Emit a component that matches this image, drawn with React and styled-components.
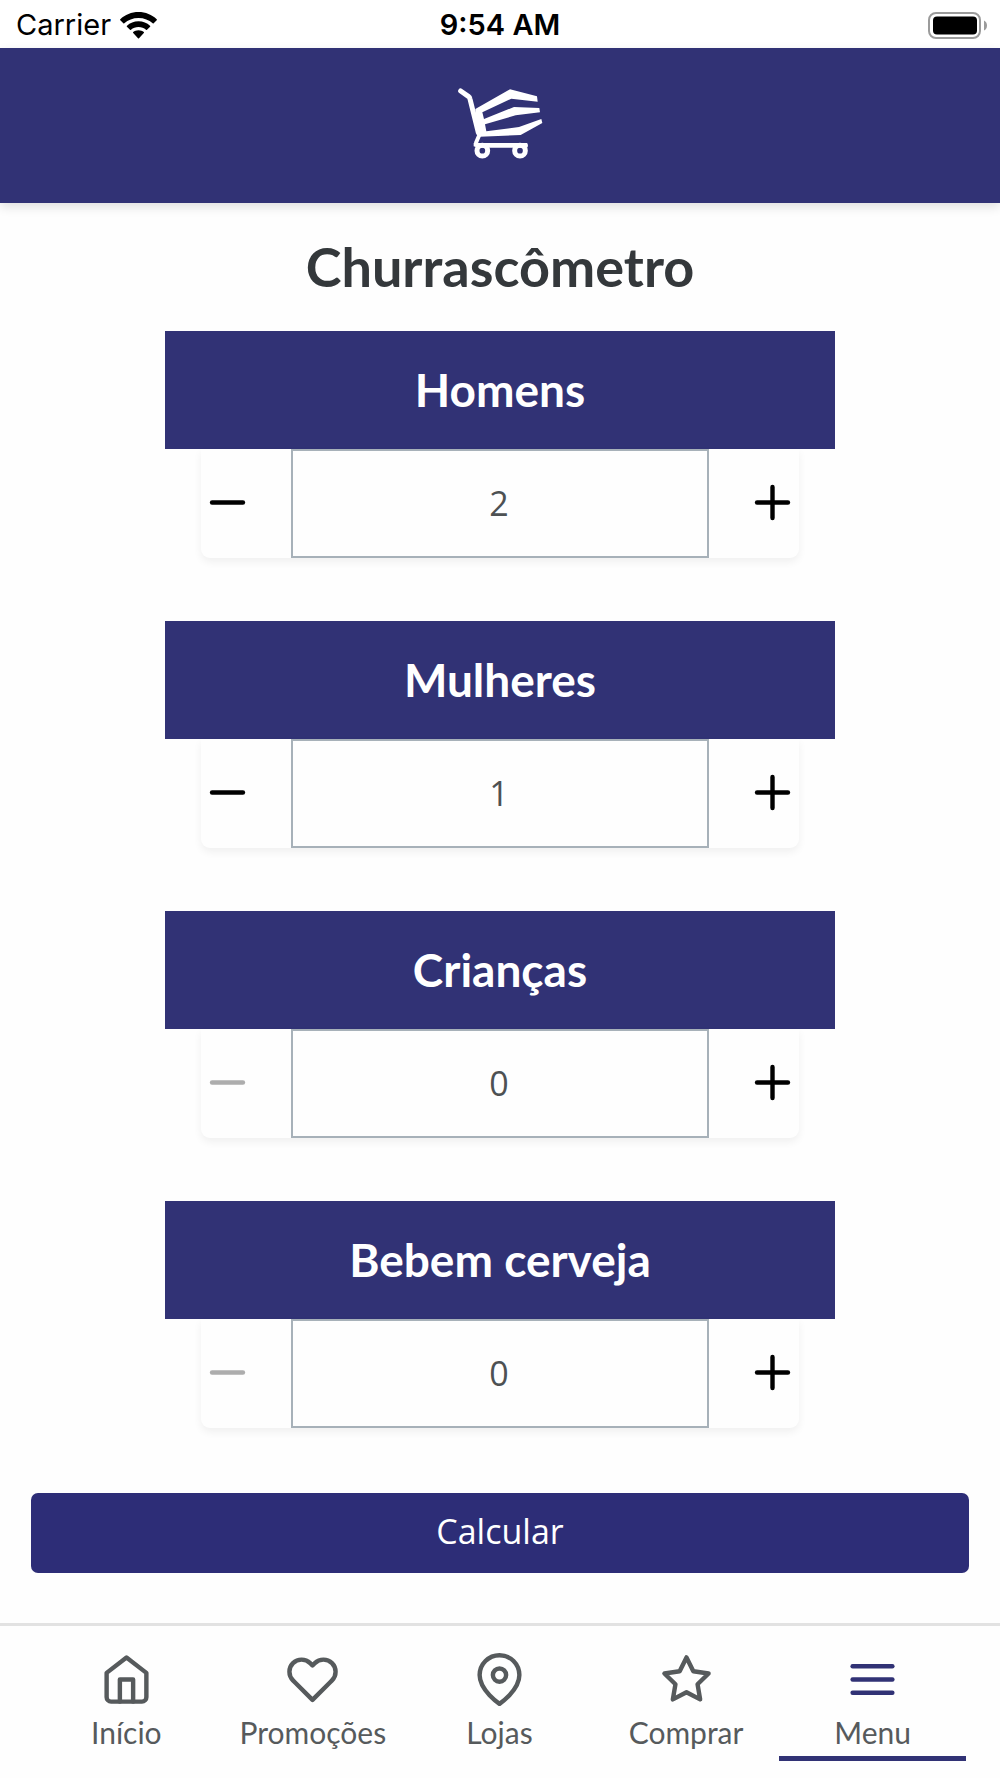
import React, { useState } from "react";
import styled, { createGlobalStyle } from "styled-components";
import {
  FiHeart,
  FiHome,
  FiMapPin,
  FiMenu,
  FiMinus,
  FiPlus,
  FiStar,
} from "react-icons/fi";

const GlobalStyle = createGlobalStyle`
  * {
    box-sizing: border-box;
  }
  body {
    margin: 0;
    background: #fefefe;
    font-family: "Lato", "Open Sans", sans-serif;
  }
`;

const Screen = styled.div`
  display: flex;
  flex-direction: column;
  min-height: 100vh;
`;
const StatusBar = styled.div`
  display: grid;
  grid-template-columns: 1fr auto 1fr;
  align-items: center;
  height: 48px;
  padding: 2px 13px 0;
  background: #fff;
  color: #000;
  font-family: "Inter", sans-serif;
  font-size: 29px;
  line-height: 46px;
`;
const Carrier = styled.div`
  display: flex;
  align-items: center;
  gap: 9px;
  padding-left: 3px;
`;
const Clock = styled.time`
  font-weight: 600;
`;
const BatteryIcon = styled.svg`
  justify-self: end;
`;
const Header = styled.header`
  display: flex;
  justify-content: center;
  padding: 39px 0 44px;
  background: #313275;
  box-shadow: 0 4px 10px rgba(0, 0, 0, 0.12);
`;
const Main = styled.main`
  flex: 1;
  display: flex;
  flex-direction: column;
  align-items: center;
  padding: 0 31px 48px;
`;
const Title = styled.h1`
  margin: 0;
  color: #34383b;
  font-size: 54px;
  font-weight: 700;
  line-height: 128px;
`;
const Form = styled.form`
  display: flex;
  flex-direction: column;
  align-items: center;
  gap: 65px;
  width: 100%;
`;
const Groups = styled.div`
  display: flex;
  flex-direction: column;
  gap: 63px;
  width: 670px;
  max-width: 100%;
`;
const Group = styled.div`
  display: flex;
  flex-direction: column;
`;
const GroupLabel = styled.label`
  background: #313275;
  color: #fff;
  font-size: 46px;
  font-weight: 700;
  line-height: 118px;
  text-align: center;
`;
const Stepper = styled.div`
  display: flex;
  height: 109px;
  margin: 0 36px;
  border-radius: 0 0 9px 9px;
  box-shadow: 0 4px 8px rgba(0, 0, 0, 0.06);
`;
const StepButton = styled.button`
  display: flex;
  align-items: center;
  justify-content: ${({ $align }) => $align};
  width: 90px;
  padding: 0 0 3px;
  border: none;
  background: transparent;
  color: #000;
  cursor: pointer;
  &:disabled {
    color: #adadad;
    cursor: default;
  }
`;
const Amount = styled.input`
  flex: 1;
  min-width: 0;
  padding: 0 2px 2px 0;
  border: 2px solid #a7b1b9;
  border-radius: 0;
  background: #fefefe;
  color: #4d5153;
  font-family: "Open Sans", sans-serif;
  font-size: 34px;
  text-align: center;
`;
const Submit = styled.button`
  width: 100%;
  height: 80px;
  padding: 0 0 4px;
  border: none;
  border-radius: 7px;
  background: #2d2d77;
  color: #fff;
  font-family: "Open Sans", sans-serif;
  font-size: 34px;
  cursor: pointer;
`;
const TabBar = styled.nav`
  display: flex;
  padding: 0 34px 17px 33px;
  border-top: 3px solid #e2e2e2;
`;
const Tab = styled.a`
  flex: 1 1 0;
  display: flex;
  flex-direction: column;
  align-items: center;
  padding-top: 27px;
  border-bottom: 5px solid ${({ $active }) => ($active ? "#313275" : "transparent")};
  color: #565a5c;
  font-size: 30px;
  line-height: 48px;
  text-decoration: none;
  svg {
    margin-bottom: 2px;
    color: ${({ $active }) => ($active ? "#313275" : "inherit")};
  }
`;

const WifiIcon = () => (
  <svg width="37" height="27" viewBox="0 0 37 27" fill="#000" aria-hidden="true">
    <path d="M18.500 0C25.500 0 32 2.700 36.700 7.200Q37.200 7.700 36.700 8.200L33.700 11.300Q33.200 11.800 32.700 11.300C29 7.900 24 5.900 18.500 5.900S8 7.900 4.300 11.300Q3.800 11.800 3.300 11.300L.3 8.200Q-.2 7.700.3 7.200C5 2.700 11.500 0 18.500 0Z" />
    <path d="M18.500 9.300C23 9.300 27 11 30 13.700Q30.600 14.200 30.100 14.700L27 17.700Q26.500 18.200 26 17.700C24 15.900 21.400 14.900 18.500 14.900S13 15.900 11 17.700Q10.500 18.200 10 17.700L6.900 14.700Q6.400 14.200 7 13.700C10 11 14 9.300 18.500 9.300Z" />
    <path d="M18.500 18.200C20.600 18.200 22.400 18.900 23.800 20.100Q24.300 20.600 23.800 21.100L19 26.300Q18.500 26.800 18 26.300L13.200 21.100Q12.700 20.600 13.200 20.100C14.600 18.900 16.400 18.200 18.500 18.200Z" />
  </svg>
);

const Battery = () => (
  <BatteryIcon width="59" height="27" viewBox="0 0 59 27" aria-hidden="true">
    <rect x="1" y="1" width="51" height="25" rx="7" fill="none" stroke="#9b9b9b" strokeWidth="2" />
    <rect x="5" y="4.500" width="44" height="18" rx="4" fill="#000" />
    <path d="M56 8.500Q59 10 59 13.500T56 18.500Z" fill="#9b9b9b" />
  </BatteryIcon>
);

const CartLogo = () => (
  <svg width="87" height="72" viewBox="50 35 261 216" role="img" aria-label="Carrinho">
    <g fill="#fff">
      <path d="M105 101L209 42L290 63L292 79L213 70L126 111L131 131L221 95L297 98L299 111L226 120L134 147L138 168L236 155L303 131L306 143L241 179L118 184L107 160Z" />
      <path d="M100 203H260Q264 206 262 216L255 217H112L100 213Z" />
    </g>
    <g fill="none" stroke="#fff" strokeLinecap="round" strokeLinejoin="round">
      <path d="M61 47L84 63Q88 66 89 71L114 172" strokeWidth="15" />
      <path d="M116 181L107 202" strokeWidth="12" />
      <circle cx="126" cy="226" r="16" strokeWidth="15" />
      <circle cx="239" cy="226" r="16" strokeWidth="15" />
    </g>
  </svg>
);

const groups = [
  { id: "homens", label: "Homens" },
  { id: "mulheres", label: "Mulheres" },
  { id: "criancas", label: "Crianças" },
  { id: "cerveja", label: "Bebem cerveja" },
];

const tabs = [
  { label: "Início", icon: FiHome },
  { label: "Promoções", icon: FiHeart },
  { label: "Lojas", icon: FiMapPin },
  { label: "Comprar", icon: FiStar },
  { label: "Menu", icon: FiMenu, active: true },
];

const App = () => {
  const [amounts, setAmounts] = useState({
    homens: 2,
    mulheres: 1,
    criancas: 0,
    cerveja: 0,
  });

  const setAmount = (id, value) => {
    setAmounts({ ...amounts, [id]: Math.max(0, Number(value) || 0) });
  };

  return (
    <Screen>
      <GlobalStyle />
      <StatusBar>
        <Carrier>
          Carrier
          <WifiIcon />
        </Carrier>
        <Clock>9:54 AM</Clock>
        <Battery />
      </StatusBar>
      <Header>
        <CartLogo />
      </Header>
      <Main>
        <Title>Churrascômetro</Title>
        <Form onSubmit={(e) => e.preventDefault()}>
          <Groups>
            {groups.map(({ id, label }) => (
              <Group key={id}>
                <GroupLabel htmlFor={id}>{label}</GroupLabel>
                <Stepper>
                  <StepButton
                    type="button"
                    $align="flex-start"
                    aria-label={`Diminuir ${label}`}
                    disabled={amounts[id] === 0}
                    onClick={() => setAmount(id, amounts[id] - 1)}
                  >
                    <FiMinus size={53} />
                  </StepButton>
                  <Amount
                    id={id}
                    type="text"
                    inputMode="numeric"
                    value={amounts[id]}
                    onChange={(e) => setAmount(id, e.target.value)}
                  />
                  <StepButton
                    type="button"
                    $align="flex-end"
                    aria-label={`Aumentar ${label}`}
                    onClick={() => setAmount(id, amounts[id] + 1)}
                  >
                    <FiPlus size={53} />
                  </StepButton>
                </Stepper>
              </Group>
            ))}
          </Groups>
          <Submit type="submit">Calcular</Submit>
        </Form>
      </Main>
      <TabBar>
        {tabs.map(({ label, icon: Icon, active }) => (
          <Tab key={label} href="#" $active={active}>
            <Icon size={53} />
            {label}
          </Tab>
        ))}
      </TabBar>
    </Screen>
  );
};

export default App;
